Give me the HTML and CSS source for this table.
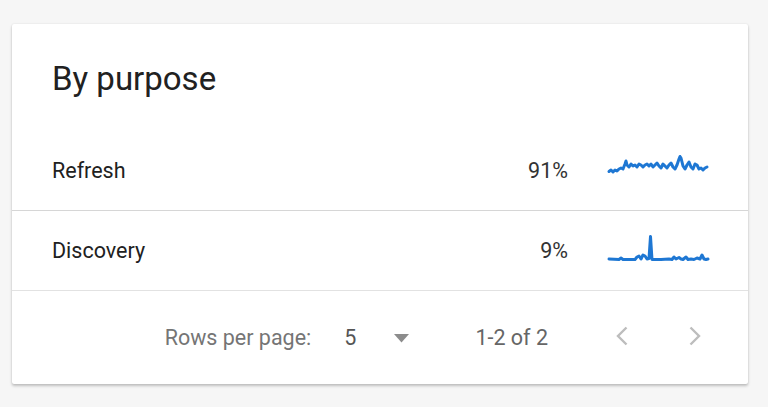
FILE: index.html
```html
<!DOCTYPE html>
<html lang="en">
<head>
<meta charset="utf-8">
<title>By purpose</title>
<link rel="stylesheet" href="styles.css">
</head>
<body>
<section class="card">
  <header class="card-header">
    <h2 class="title">By purpose</h2>
  </header>
  <div class="rows">
    <div class="row">
      <span class="label">Refresh</span>
      <span class="pct">91%</span>
      <svg class="spark" width="100" height="32" viewBox="0 0 100 32">
        <polyline points="0,16.5 2,15 4,17 6,15 8,16 10,14 12,13 14,14 16,9 17,6 18,10 20,12 22,9 24,11 26,10 28,12 30,9 32,10 34,12 36,10 38,9 40,11 42,9 44,12 46,10 48,8 50,11 52,13 54,9 56,11 58,13 60,10 62,8 64,12 66,14 68,10 70,4 71,1.5 72,3 74,11 76,14 78,10 80,7 82,12 84,14 86,9 88,10 90,14 92,13 94,15 96,13 98,12"/>
      </svg>
    </div>
    <div class="row">
      <span class="label">Discovery</span>
      <span class="pct">9%</span>
      <svg class="spark" width="100" height="32" viewBox="0 0 100 32">
        <polyline points="0,24 10,24.5 12,23 14,24.5 26,24.5 28,22 30,21 32,24 34,20 36,21 38,24 40,23.5 41.5,1.5 43,24.5 52,24.5 60,24 63,24.5 65,22 67,24 70,22.5 72,24 74,24.5 77,22 79,24.5 82,24 85,24.5 88,23 91,24 93,20 95,24 97,24.5 99,24"/>
      </svg>
    </div>
  </div>
  <footer class="pager">
    <span class="pager-label">Rows per page:</span>
    <span class="pager-value">5</span>
    <svg class="pager-drop" width="15" height="9" viewBox="0 0 15 9"><polygon points="0,0 15,0 7.5,8.5"/></svg>
    <span class="pager-range">1-2 of 2</span>
    <svg class="chev chev-prev" width="12" height="20" viewBox="0 0 12 20"><polyline points="10.5,1.5 2,10 10.5,18.5"/></svg>
    <svg class="chev chev-next" width="12" height="20" viewBox="0 0 12 20"><polyline points="1.5,1.5 10,10 1.5,18.5"/></svg>
  </footer>
</section>
</body>
</html>
```

FILE: styles.css
```css
html, body {
  margin: 0;
  padding: 0;
}
body {
  background: #f6f6f6;
  font-family: Roboto, "Liberation Sans", Arial, sans-serif;
  color: #212121;
  padding: 24px 20px 23px 12px;
}
.card {
  width: 736px;
  height: 360px;
  background: #fff;
  box-shadow: 0 2px 3px rgba(0,0,0,0.22), 0 0 2px rgba(0,0,0,0.10);
  border-radius: 2px;
  display: flex;
  flex-direction: column;
  box-sizing: border-box;
}
.card-header {
  height: 107px;
  box-sizing: border-box;
  padding: 35px 40px 0 40px;
}
.title {
  margin: 0;
  font-weight: 400;
  font-size: 33px;
  line-height: 40px;
  color: #212121;
}
.row {
  height: 80px;
  box-sizing: border-box;
  border-bottom: 1px solid #d6d6d6;
  display: grid;
  grid-template-columns: 1fr auto 100px;
  column-gap: 41px;
  align-items: center;
  padding: 0 39px 0 40px;
  font-size: 21.5px;
}
.row + .row {
  border-bottom-color: #e2e2e2;
}
.label {
  color: #212121;
}
.pct {
  color: #333;
  text-align: right;
}
.spark {
  display: block;
  overflow: visible;
}
.spark polyline {
  fill: none;
  stroke: #1e77d3;
  stroke-width: 3;
  stroke-linejoin: round;
  stroke-linecap: round;
}
.pager {
  flex: 1;
  display: flex;
  align-items: center;
  justify-content: flex-end;
  padding-right: 47px;
  font-size: 21.5px;
  color: #757575;
}
.pager-value {
  margin-left: 33px;
  color: #555;
}
.pager-drop {
  margin-left: 38px;
  fill: #8c8c8c;
  margin-top: 1px;
}
.pager-range {
  margin-left: 66px;
  color: #666;
}
.chev {
  fill: none;
  stroke: #bdbdbd;
  stroke-width: 2.4;
  margin-top: -4px;
}
.chev-prev {
  margin-left: 68px;
}
.chev-next {
  margin-left: 61px;
}
```
